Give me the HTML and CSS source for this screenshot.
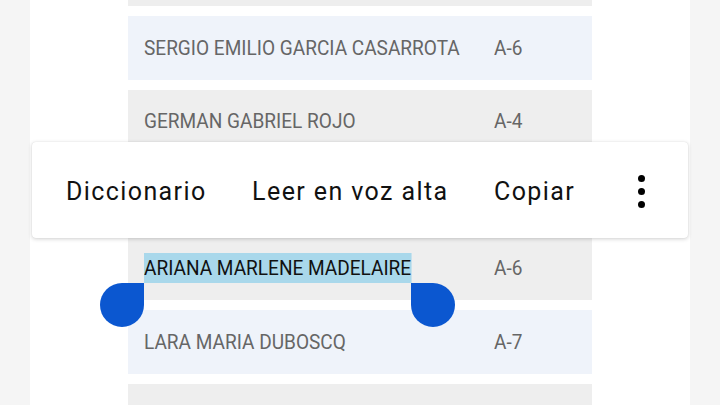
FILE: index.html
```html
<!DOCTYPE html>
<html lang="es">
<head>
<meta charset="utf-8">
<link rel="stylesheet" href="styles.css">
</head>
<body>
<div class="panel">
  <div class="list">
    <div class="row gray"><span class="name"></span><span class="code"></span></div>
    <div class="row blue"><span class="name"><span class="txt">SERGIO EMILIO GARCIA CASARROTA</span></span><span class="code">A-6</span></div>
    <div class="row gray"><span class="name"><span class="txt">GERMAN GABRIEL ROJO</span></span><span class="code">A-4</span></div>
    <div class="row blue"><span class="name"></span><span class="code"></span></div>
    <div class="row gray"><span class="name"><span class="txt"><span class="sel">ARIANA MARLENE MADELAIRE</span></span></span><span class="code">A-6</span></div>
    <div class="row blue"><span class="name"><span class="txt">LARA MARIA DUBOSCQ</span></span><span class="code">A-7</span></div>
    <div class="row gray"><span class="name"></span><span class="code"></span></div>
  </div>
</div>

<div class="menu">
  <span class="item">Diccionario</span>
  <span class="item">Leer en voz alta</span>
  <span class="item">Copiar</span>
  <span class="more"><i></i><i></i><i></i></span>
</div>

<div class="handle left"></div>
<div class="handle right"></div>
</body>
</html>
```

FILE: styles.css
```css
html, body {
  margin: 0;
  padding: 0;
}
body {
  width: 720px;
  height: 405px;
  overflow: hidden;
  background: #f5f5f5;
  font-family: Roboto, "Noto Sans", sans-serif;
  position: relative;
}
.panel {
  margin: 0 30px;
  height: 405px;
  background: #ffffff;
  padding-left: 98px;
  overflow: hidden;
}
.list {
  width: 464px;
  margin-top: -57.5px;
  display: flex;
  flex-direction: column;
  gap: 10px;
}
.row {
  height: 63.5px;
  display: flex;
  align-items: center;
  padding-left: 16px;
  color: #666666;
  font-size: 21px;
}
.row.gray { background: #eeeeee; }
.row.blue { background: #eff3fa; }
.name {
  flex: 0 0 350px;
  white-space: nowrap;
}
.txt {
  display: inline-block;
  transform: scaleX(0.907);
  transform-origin: left center;
}
.code {
  display: inline-block;
  transform: scaleX(0.907);
  transform-origin: left center;
}
.sel {
  background: #a9d8eb;
  color: #111111;
  padding: 3px 0;
}
.menu {
  position: absolute;
  left: 32px;
  top: 142px;
  width: 656px;
  height: 96px;
  background: #ffffff;
  border-radius: 4px;
  box-shadow: 0 1px 4px rgba(0,0,0,0.18), 0 0 1px rgba(0,0,0,0.12);
  display: flex;
  align-items: center;
  padding-left: 34px;
  padding-top: 2px;
  box-sizing: border-box;
  gap: 45.5px;
  color: #111111;
  font-size: 25px;
  letter-spacing: 1.4px;
}
.more {
  display: flex;
  flex-direction: column;
  gap: 6px;
  margin-left: 17px;
}
.more i {
  display: block;
  width: 7px;
  height: 7px;
  border-radius: 50%;
  background: #000000;
}
.handle {
  position: absolute;
  top: 283px;
  width: 44px;
  height: 44px;
  background: #0b57d0;
}
.handle.left {
  left: 100px;
  border-radius: 50% 0 50% 50%;
}
.handle.right {
  left: 411px;
  border-radius: 0 50% 50% 50%;
}
```
